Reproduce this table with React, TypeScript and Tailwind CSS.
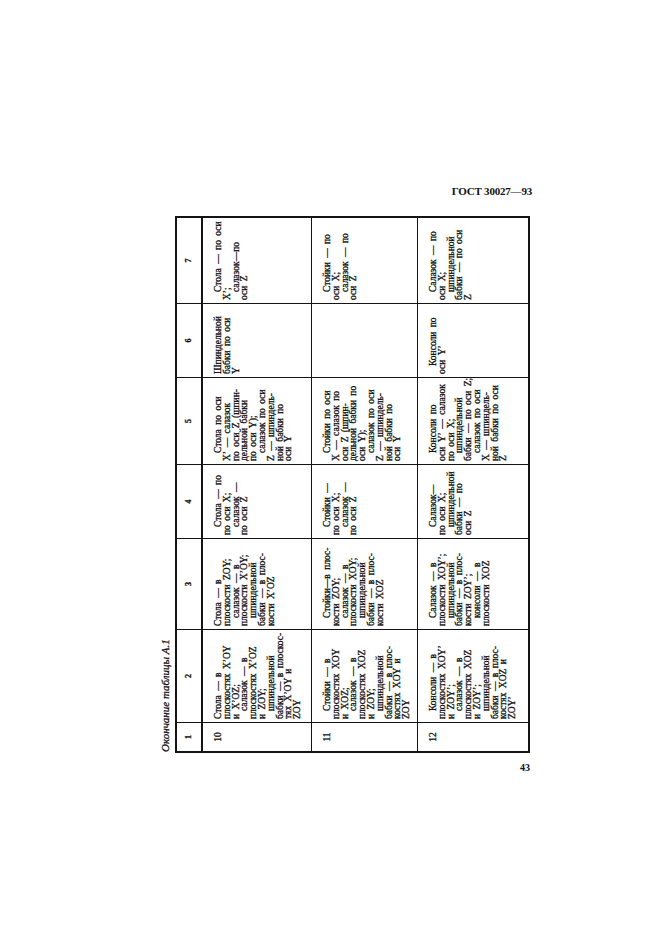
import clsx from "clsx";

// rows of "Окончание таблицы А.1"; a leading ">" marks an indented paragraph start
const rows: { n: string; cells: string[][] }[] = [
  {
    n: "10",
    cells: [
      ["Стола — в", "плоскостях X’OY", "и X’OZ;", ">салазок — в", "плоскостях X’OZ", "и ZOY;", ">шпиндельной", "бабки — в плоскос-", "тях X’OY и", "ZOY"],
      ["Стола — в", "плоскости ZOY;", ">салазок — в", "плоскости X’OY;", ">шпиндельной", "бабки — в плос-", "кости X’OZ"],
      [">Стола — по", "по оси X;", ">салазок —", "по оси Z"],
      [">Стола по оси", "X’ — салазок", "по оси Z (шпин-", "дельной бабки", "по оси Y);", ">салазок по оси", "Z — шпиндель-", "ной бабки по", "оси Y"],
      ["Шпиндельной", "бабки по оси", "Y"],
      [">Стола — по оси", "X’;", ">салазок—по", "оси Z"],
    ],
  },
  {
    n: "11",
    cells: [
      [">Стойки — в", "плоскостях XOY", "и XOZ;", ">салазок — в", "плоскостях XOZ", "и ZOY;", ">шпиндельной", "бабки — в плос-", "костях XOY и", "ZOY"],
      [">Стойки—в плос-", "кости ZOY;", ">салазок — в", "плоскости XOY;", ">шпиндельной", "бабки — в плос-", "кости XOZ"],
      [">Стойки —", "по оси X;", ">салазок —", "по оси Z"],
      [">Стойки по оси", "X — салазок по", "оси Z (шпин-", "дельной бабки по", "оси Y);", ">салазок по оси", "Z — шпиндель-", "ной бабки по", "оси Y"],
      [],
      [">Стойки — по", "оси X;", ">салазок — по", "оси Z"],
    ],
  },
  {
    n: "12",
    cells: [
      [">Консоли — в", "плоскостях XOY’", "и ZOY’;", ">салазок — в", "плоскостях XOZ", "и ZOY’;", ">шпиндельной", "бабки — в плос-", "костях XOZ и", "ZOY’"],
      [">Салазок — в", "плоскости XOY’;", ">шпиндельной", "бабки — в плос-", "кости ZOY’;", ">консоли — в", "плоскости XOZ"],
      [">Салазок—", "по оси X;", ">шпиндельной", "бабки — по", "оси Z"],
      [">Консоли по", "оси Y’ — салазок", "по оси X;", ">шпиндельной", "бабки — по оси Z;", ">салазок по оси", "X — шпиндель-", "ной бабки по оси", "Z"],
      [">Консоли по", "оси Y’"],
      [">Салазок — по", "оси X;", ">шпиндельной", "бабки — по оси", "Z"],
    ],
  },
];

const heads = ["1", "2", "3", "4", "5", "6", "7"];

function Lines({ lines }: { lines: string[] }) {
  return (
    <div className="flex flex-col">
      {lines.map((l, i) => {
        const indent = l.startsWith(">");
        return (
          <span key={i} className={clsx("whitespace-nowrap leading-[8.8px]", indent && "pl-[8px]")}>
            {indent ? l.slice(1) : l}
          </span>
        );
      })}
    </div>
  );
}

function Table() {
  return (
    <div className="grid w-[537px] grid-cols-[29px_93px_91px_74px_87px_74px_85px] grid-rows-[26px_109px_106px_110px] border-2 border-[#141414] text-[9.5px] text-[#111] [word-spacing:2px] [-webkit-text-stroke:0.3px_#111]">
      {heads.map((h, i) => (
        <div
          key={h}
          className={clsx(
            "flex items-center justify-center border-b-2 border-[#141414] text-[8px] font-bold",
            i === 6 ? "border-r-0" : "border-r"
          )}
        >
          {h}
        </div>
      ))}
      {rows.map((row, ri) => (
        <div key={row.n} className="contents">
          <div
            className={clsx(
              "flex justify-center border-r border-[#141414] pt-[11px] text-[9.5px] leading-[8.8px]",
              ri === 2 ? "border-b-0" : "border-b"
            )}
          >
            {row.n}
          </div>
          {row.cells.map((c, ci) => (
            <div
              key={ci}
              className={clsx(
                "border-[#141414] pl-[3px] pt-[11px]",
                ci === 5 ? "border-r-0" : "border-r",
                ri === 2 ? "border-b-0" : "border-b"
              )}
            >
              <Lines lines={c} />
            </div>
          ))}
        </div>
      ))}
    </div>
  );
}

export default function App() {
  return (
    <div className="min-h-[935px] bg-white pt-[183px] font-['Liberation_Serif',serif] text-[#111]">
      <div className="flex h-[16px] justify-end pr-[129px] text-[11px] font-bold leading-[16px] tracking-[-0.2px]">
        ГОСТ 30027—93
      </div>

      <div className="ml-[154px] mt-[17px] h-[537px] w-[376px]">
        <div className="w-[537px] origin-top-left -rotate-90 translate-y-[537px]">
          <div className="flex h-[21px] items-center pl-[1px] text-[11px] italic leading-[12px] [-webkit-text-stroke:0.3px_#111]">
            Окончание таблицы А.1
          </div>
          <Table />
        </div>
      </div>

      <div className="mt-[9px] flex justify-end pr-[131px] text-[10px] font-bold leading-[12px]">
        43
      </div>
    </div>
  );
}
